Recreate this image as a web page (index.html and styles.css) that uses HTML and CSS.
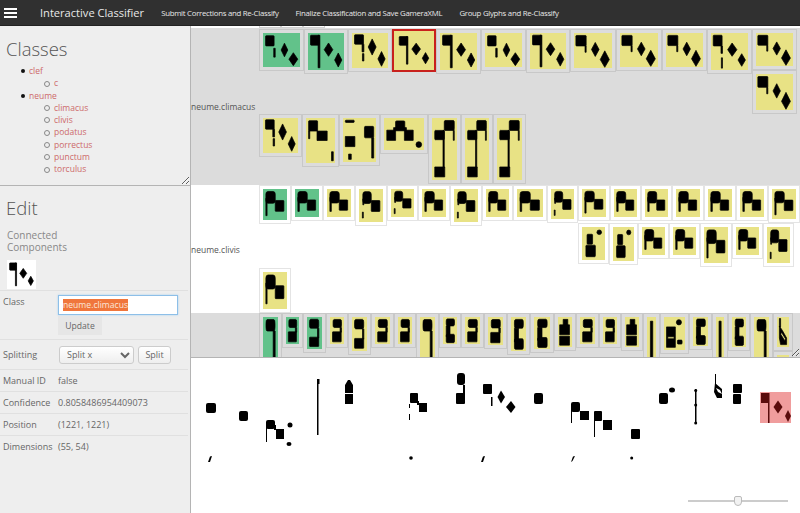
FILE: index.html
```html
<!DOCTYPE html>
<html lang="en">
<head>
    <meta charset="UTF-8">
    <meta name="viewport" content="width=device-width, initial-scale=1.0">
    <title>Interactive Classifier</title>
    <link rel="stylesheet" href="styles.css">
</head>
<body>
    <!-- Glyph shapes, stretched to each thumbnail's size -->
    <svg class="defs" width="0" height="0">
        <symbol id="c1" viewBox="0 0 100 100" preserveAspectRatio="none"><rect x="7" y="8" width="23" height="30" rx="2"/><rect x="29" y="45" width="4" height="26"/><polygon points="49,50 58,30 67,50 58,70"/><polygon points="70,77 82,58 94,77 82,96"/></symbol>
        <symbol id="c2" viewBox="0 0 100 100" preserveAspectRatio="none"><rect x="7" y="6" width="24" height="27" rx="2"/><rect x="28" y="6" width="5" height="88"/><polygon points="45,45 57,27 69,45 57,63"/><polygon points="74,73 84,54 94,73 84,92"/></symbol>
        <symbol id="c3" viewBox="0 0 100 100" preserveAspectRatio="none"><rect x="7" y="5" width="25" height="27" rx="2"/><rect x="28" y="32" width="5" height="22"/><rect x="29" y="59" width="4" height="21"/><polygon points="45,40 56,17 67,40 56,63"/><polygon points="72,74 82,53 92,74 82,95"/></symbol>
        <symbol id="c4" viewBox="0 0 100 100" preserveAspectRatio="none"><rect x="9" y="10" width="23" height="25" rx="2"/><rect x="29" y="10" width="4" height="79"/><polygon points="44,46 56,29 68,46 56,63"/><polygon points="73,72 82,56 91,72 82,88"/></symbol>
        <symbol id="c8" viewBox="0 0 100 100" preserveAspectRatio="none"><rect x="5" y="7" width="27" height="30" rx="2"/><rect x="29" y="37" width="3" height="18"/><polygon points="46,47 56,27 66,47 56,67"/><polygon points="69,76 81,51 93,76 81,98"/></symbol>
        <symbol id="c11" viewBox="0 0 100 100" preserveAspectRatio="none"><rect x="6" y="6" width="24" height="29" rx="2"/><rect x="27" y="35" width="4" height="20"/><rect x="28" y="67" width="3" height="28"/><polygon points="45,45 57,27 70,45 57,63"/><polygon points="73,73 83,56 93,73 83,90"/></symbol>
        <symbol id="t1" viewBox="0 0 100 100" preserveAspectRatio="none"><rect x="9" y="6" width="31" height="23" rx="2"/><rect x="9" y="29" width="4" height="17"/><rect x="38" y="29" width="35" height="21"/><rect x="88" y="75" width="6" height="20"/></symbol>
        <symbol id="t2" viewBox="0 0 100 100" preserveAspectRatio="none"><rect x="7" y="5" width="27" height="5" rx="2"/><rect x="7" y="42" width="29" height="23"/><rect x="17" y="82" width="8" height="12"/><rect x="65" y="19" width="28" height="26" rx="3"/><rect x="87" y="45" width="6" height="46"/></symbol>
        <symbol id="t3" viewBox="0 0 100 100" preserveAspectRatio="none"><rect x="29" y="9" width="23" height="28" rx="3"/><rect x="7" y="38" width="22" height="32"/><rect x="51" y="38" width="22" height="32"/><rect x="24" y="30" width="32" height="10"/><ellipse cx="87" cy="83" rx="7" ry="9"/></symbol>
        <symbol id="j" viewBox="0 0 100 100" preserveAspectRatio="none"><rect x="49" y="4" width="40" height="16" rx="3"/><rect x="85" y="20" width="4" height="16"/><rect x="11" y="20" width="38" height="15" rx="2"/><rect x="44" y="20" width="5" height="60"/><rect x="11" y="79" width="40" height="16"/></symbol>
        <symbol id="v1" viewBox="0 0 100 100" preserveAspectRatio="none"><rect x="12" y="8" width="39" height="38" rx="9"/><rect x="12" y="30" width="5" height="56"/><rect x="51" y="37" width="36" height="35" rx="2"/></symbol>
        <symbol id="v2" viewBox="0 0 100 100" preserveAspectRatio="none"><rect x="12" y="9" width="39" height="41" rx="9"/><rect x="12" y="30" width="6" height="50"/><rect x="51" y="39" width="35" height="37" rx="2"/></symbol>
        <symbol id="v3" viewBox="0 0 100 100" preserveAspectRatio="none"><rect x="16" y="8" width="35" height="36" rx="9"/><rect x="16" y="30" width="4" height="18"/><rect x="14" y="70" width="4" height="18"/><rect x="51" y="35" width="36" height="33" rx="2"/></symbol>
        <symbol id="p1" viewBox="0 0 100 100" preserveAspectRatio="none"><rect x="22" y="22" width="24" height="30" rx="3"/><rect x="17" y="55" width="41" height="35" rx="3"/><ellipse cx="75" cy="16" rx="10" ry="7"/></symbol>
        <symbol id="s1" viewBox="0 0 100 100" preserveAspectRatio="none"><rect x="22" y="9" width="60" height="30" rx="8"/><rect x="72" y="39" width="10" height="17"/><rect x="18" y="55" width="62" height="37" rx="2"/></symbol>
        <symbol id="s1b" viewBox="0 0 100 100" preserveAspectRatio="none"><rect x="17" y="7" width="61" height="28" rx="8"/><rect x="70" y="35" width="9" height="30"/><rect x="17" y="63" width="61" height="29" rx="2"/></symbol>
        <symbol id="s2" viewBox="0 0 100 100" preserveAspectRatio="none"><rect x="20" y="5" width="60" height="22" rx="8"/><rect x="68" y="27" width="13" height="73"/></symbol>
        <symbol id="s3" viewBox="0 0 100 100" preserveAspectRatio="none"><rect x="23" y="7" width="59" height="26" rx="8"/><rect x="23" y="33" width="27" height="40"/><rect x="23" y="64" width="59" height="31" rx="6"/></symbol>
        <symbol id="s4" viewBox="0 0 100 100" preserveAspectRatio="none"><rect x="37" y="8" width="33" height="20"/><rect x="12" y="26" width="70" height="33"/><rect x="12" y="64" width="70" height="30"/></symbol>
        <symbol id="s5" viewBox="0 0 100 100" preserveAspectRatio="none"><path fill-rule="evenodd" d="M12 30H54V92H12ZM18 60V66H48V60Z"/><ellipse cx="71" cy="16" rx="12" ry="8"/><rect x="64" y="70" width="22" height="12" rx="3"/></symbol>
        <symbol id="s6" viewBox="0 0 100 100" preserveAspectRatio="none"><rect x="38" y="8" width="26" height="92"/></symbol>
        <symbol id="s7" viewBox="0 0 100 100" preserveAspectRatio="none"><rect x="20" y="5" width="10" height="28"/><path fill-rule="evenodd" d="M20 30L45 45L80 70V92H30L20 70ZM36 50L32 58L66 80L70 72Z"/></symbol>
    </svg>

    <header class="navbar">
        <button class="menu-toggle" aria-label="Menu"><span></span><span></span><span></span></button>
        <span class="navbar-title">Interactive Classifier</span>
        <nav class="navbar-links">
            <a>Submit Corrections and Re-Classify</a>
            <a>Finalize Classification and Save GameraXML</a>
            <a>Group Glyphs and Re-Classify</a>
        </nav>
    </header>

    <div class="workspace">
        <aside class="sidebar">
            <section class="classes-panel">
                <h2 class="panel-title">Classes</h2>
                <ul class="class-tree">
                    <li><a>clef</a>
                        <ul>
                            <li><a>c</a></li>
                        </ul>
                    </li>
                    <li><a>neume</a>
                        <ul>
                            <li><a>climacus</a></li>
                            <li><a>clivis</a></li>
                            <li><a>podatus</a></li>
                            <li><a>porrectus</a></li>
                            <li><a>punctum</a></li>
                            <li><a>torculus</a></li>
                        </ul>
                    </li>
                </ul>
            </section>

            <section class="edit-panel">
                <h2 class="panel-title">Edit</h2>
                <h3 class="panel-subtitle">Connected Components</h3>
                <svg class="edit-preview" width="29" height="29"><use href="#c4"/></svg>
                <div class="field-row field-row-class">
                    <span class="field-label">Class</span>
                    <div class="field-value">
                        <div class="class-input"><span class="class-input-selected">neume.climacus</span></div>
                        <button class="btn-update">Update</button>
                    </div>
                </div>
                <div class="field-row field-row-split">
                    <span class="field-label">Splitting</span>
                    <div class="field-value split-controls">
                        <select class="split-select"><option>Split x</option></select>
                        <button class="btn-split">Split</button>
                    </div>
                </div>
                <div class="field-row"><span class="field-label">Manual ID</span><span class="field-value">false</span></div>
                <div class="field-row"><span class="field-label">Confidence</span><span class="field-value">0.8058486954409073</span></div>
                <div class="field-row"><span class="field-label">Position</span><span class="field-value">(1221, 1221)</span></div>
                <div class="field-row"><span class="field-label">Dimensions</span><span class="field-value">(55, 54)</span></div>
            </section>
        </aside>

        <main class="content">
            <section class="glyph-table">
                <div class="group group-sliver">
                    <div class="group-label"></div>
                    <div class="line">
                        <div class="thumb thumb-cut"></div>
                        <div class="thumb thumb-cut"></div>
                        <div class="thumb thumb-cut"></div>
                    </div>
                </div>

                <div class="group group-shaded group-climacus">
                    <div class="group-label">neume.climacus</div>
                    <div class="group-lines">
                        <div class="line">
                            <div class="thumb known"><svg width="37" height="34"><use href="#c1"/></svg></div>
                            <div class="thumb known"><svg width="36" height="37"><use href="#c2"/></svg></div>
                            <div class="thumb"><svg width="36" height="35"><use href="#c3"/></svg></div>
                            <div class="thumb selected"><svg width="36" height="35"><use href="#c4"/></svg></div>
                            <div class="thumb"><svg width="37" height="37"><use href="#c2"/></svg></div>
                            <div class="thumb"><svg width="37" height="34"><use href="#c1"/></svg></div>
                            <div class="thumb"><svg width="36" height="36"><use href="#c2"/></svg></div>
                            <div class="thumb"><svg width="38" height="35"><use href="#c8"/></svg></div>
                            <div class="thumb"><svg width="38" height="34"><use href="#c8"/></svg></div>
                            <div class="thumb"><svg width="37" height="34"><use href="#c8"/></svg></div>
                            <div class="thumb"><svg width="37" height="37"><use href="#c11"/></svg></div>
                            <div class="thumb-stack">
                                <div class="thumb"><svg width="37" height="33"><use href="#c8"/></svg></div>
                                <div class="thumb"><svg width="37" height="36"><use href="#c8"/></svg></div>
                            </div>
                        </div>
                        <div class="line line-tall">
                            <div class="thumb"><svg width="35" height="35"><use href="#c3"/></svg></div>
                            <div class="thumb"><svg width="29" height="45"><use href="#t1"/></svg></div>
                            <div class="thumb"><svg width="33" height="44"><use href="#t2"/></svg></div>
                            <div class="thumb"><svg width="40" height="32"><use href="#t3"/></svg></div>
                            <div class="thumb"><svg width="25" height="62"><use href="#j"/></svg></div>
                            <div class="thumb"><svg width="24" height="62"><use href="#j"/></svg></div>
                            <div class="thumb"><svg width="25" height="62"><use href="#j"/></svg></div>
                        </div>
                    </div>
                </div>

                <div class="group group-clivis">
                    <div class="group-label">neume.clivis</div>
                    <div class="group-lines">
                        <div class="line line-clivis-first">
                            <div class="thumb known"><svg width="24" height="31"><use href="#v1"/></svg></div>
                            <div class="thumb known"><svg width="24" height="28"><use href="#v2"/></svg></div>
                            <div class="thumb"><svg width="24" height="28"><use href="#v2"/></svg></div>
                            <div class="thumb"><svg width="24" height="33"><use href="#v3"/></svg></div>
                            <div class="thumb"><svg width="23" height="28"><use href="#v3"/></svg></div>
                            <div class="thumb"><svg width="24" height="28"><use href="#v2"/></svg></div>
                            <div class="thumb"><svg width="24" height="33"><use href="#v3"/></svg></div>
                            <div class="thumb"><svg width="23" height="28"><use href="#v2"/></svg></div>
                            <div class="thumb"><svg width="26" height="28"><use href="#v2"/></svg></div>
                            <div class="thumb"><svg width="23" height="30"><use href="#v3"/></svg></div>
                            <div class="thumb"><svg width="24" height="28"><use href="#v1"/></svg></div>
                            <div class="thumb"><svg width="23" height="28"><use href="#v2"/></svg></div>
                            <div class="thumb"><svg width="23" height="28"><use href="#v2"/></svg></div>
                            <div class="thumb"><svg width="24" height="28"><use href="#v2"/></svg></div>
                            <div class="thumb"><svg width="24" height="28"><use href="#v2"/></svg></div>
                            <div class="thumb"><svg width="24" height="28"><use href="#v2"/></svg></div>
                            <div class="thumb"><svg width="24" height="30"><use href="#v1"/></svg></div>
                        </div>
                        <div class="line line-clivis-second">
                            <div class="thumb"><svg width="23" height="33"><use href="#p1"/></svg></div>
                            <div class="thumb"><svg width="21" height="34"><use href="#p1"/></svg></div>
                            <div class="thumb"><svg width="23" height="28"><use href="#v2"/></svg></div>
                            <div class="thumb"><svg width="23" height="28"><use href="#v2"/></svg></div>
                            <div class="thumb"><svg width="24" height="36"><use href="#v1"/></svg></div>
                            <div class="thumb"><svg width="23" height="28"><use href="#v2"/></svg></div>
                            <div class="thumb"><svg width="23" height="36"><use href="#v3"/></svg></div>
                        </div>
                        <div class="line line-clivis-third">
                            <div class="thumb"><svg width="24" height="37"><use href="#v1"/></svg></div>
                        </div>
                    </div>
                </div>

                <div class="group group-shaded">
                    <div class="group-label"></div>
                    <div class="line">
                        <div class="thumb known"><svg width="15" height="52"><use href="#s2"/></svg></div>
                        <div class="thumb known"><svg width="13" height="27"><use href="#s1"/></svg></div>
                        <div class="thumb known"><svg width="15" height="32"><use href="#s1b"/></svg></div>
                        <div class="thumb"><svg width="14" height="27"><use href="#s1"/></svg></div>
                        <div class="thumb"><svg width="15" height="34"><use href="#s1b"/></svg></div>
                        <div class="thumb"><svg width="15" height="27"><use href="#s1"/></svg></div>
                        <div class="thumb"><svg width="14" height="27"><use href="#s1"/></svg></div>
                        <div class="thumb"><svg width="15" height="52"><use href="#s2"/></svg></div>
                        <div class="thumb"><svg width="14" height="27"><use href="#s3"/></svg></div>
                        <div class="thumb"><svg width="15" height="27"><use href="#s1"/></svg></div>
                        <div class="thumb"><svg width="15" height="28"><use href="#s1"/></svg></div>
                        <div class="thumb"><svg width="15" height="34"><use href="#s3"/></svg></div>
                        <div class="thumb"><svg width="16" height="32"><use href="#s3"/></svg></div>
                        <div class="thumb"><svg width="14" height="30"><use href="#s4"/></svg></div>
                        <div class="thumb"><svg width="15" height="27"><use href="#s1"/></svg></div>
                        <div class="thumb"><svg width="14" height="27"><use href="#s1"/></svg></div>
                        <div class="thumb"><svg width="14" height="30"><use href="#s4"/></svg></div>
                        <div class="thumb"><svg width="9" height="52"><use href="#s6"/></svg></div>
                        <div class="thumb"><svg width="21" height="33"><use href="#s5"/></svg></div>
                        <div class="thumb"><svg width="15" height="29"><use href="#s3"/></svg></div>
                        <div class="thumb"><svg width="8" height="52"><use href="#s6"/></svg></div>
                        <div class="thumb"><svg width="14" height="30"><use href="#s3"/></svg></div>
                        <div class="thumb"><svg width="15" height="52"><use href="#s2"/></svg></div>
                        <div class="thumb-stack">
                            <div class="thumb"><svg width="12" height="30"><use href="#s7"/></svg></div>
                            <div class="thumb"><svg width="12" height="30"></svg></div>
                        </div>
                    </div>
                </div>
            </section>

            <section class="page-view">
                <!-- Page image: the glyphs as they sit on the manuscript, in window coordinates -->
                <svg class="page-image" width="609" height="155" viewBox="191 358 609 155">
                    <rect x="206" y="403" width="10" height="10" rx="2"/>
                    <rect x="239" y="411" width="9" height="10" rx="2"/>
                    <rect x="266" y="420" width="9" height="9" rx="2"/><rect x="276" y="429" width="8" height="10"/><rect x="266" y="427" width="1" height="15"/><rect x="274" y="425" width="2" height="5"/>
                    <circle cx="290" cy="425" r="2.5"/><ellipse cx="289" cy="444" rx="2.5" ry="2"/>
                    <rect x="317" y="379" width="1.5" height="56"/><rect x="318" y="379" width="1.5" height="5"/>
                    <polygon points="345,385 348,380 350,380 353,385 353,393 345,393"/><rect x="345" y="394" width="8" height="10"/>
                    <rect x="410" y="393" width="8" height="10" rx="1"/><rect x="419" y="403" width="8" height="9"/><rect x="417" y="401" width="2" height="4"/><rect x="409" y="404" width="1" height="4"/><rect x="409" y="414" width="1" height="6"/>
                    <rect x="457" y="373" width="8" height="12" rx="3"/><rect x="463" y="385" width="2" height="9"/><rect x="456" y="393" width="9" height="11" rx="1"/>
                    <rect x="483" y="384" width="9" height="10" rx="1"/><rect x="491" y="397" width="1.5" height="9"/>
                    <polygon points="497.5,397 501,390.500 505,397 501,403.500"/><polygon points="506,407 511,401 515.500,407 511,413"/>
                    <rect x="534" y="393" width="9" height="11" rx="2"/>
                    <rect x="571" y="402" width="9" height="10" rx="2"/><rect x="571" y="408" width="1" height="15"/><rect x="580" y="411" width="9" height="9"/>
                    <rect x="594" y="411" width="8" height="10" rx="1"/><rect x="594" y="418" width="1" height="19"/><rect x="603" y="420" width="9" height="10"/>
                    <rect x="631" y="429" width="9" height="10" rx="1"/>
                    <rect x="659" y="393" width="9" height="11" rx="2"/><ellipse cx="672" cy="390" rx="3" ry="2.500"/>
                    <rect x="695" y="389" width="1.500" height="35"/><circle cx="695.700" cy="390.500" r="1.500"/><circle cx="695.700" cy="405" r="1.500"/><circle cx="695.700" cy="423" r="1.500"/>
                    <rect x="715" y="374" width="1" height="10"/>
                    <path fill-rule="evenodd" d="M715 383L722 389V398H717L714 392ZM716 388L718 392L722 394L720 390Z"/>
                    <rect x="733" y="384" width="9" height="9" rx="1"/><rect x="733" y="394" width="8" height="10" rx="1"/>
                    <polygon points="208,462 210,456.500 212,456 210,462"/>
                    <circle cx="411" cy="458" r="1.800"/>
                    <polygon points="481,462 483,456.500 485,456 483,462"/>
                    <polygon points="571,462 573,456.500 575,456 572.500,461"/>
                    <circle cx="631.700" cy="458" r="1.500"/>
                    <rect class="highlight" x="760" y="392" width="31" height="31"/>
                    <g class="highlight-glyph">
                        <rect x="761" y="393" width="8" height="10"/><rect x="768" y="393" width="1.500" height="30"/>
                        <polygon points="773.500,407 778,400.500 782.500,407 778,413.500"/><polygon points="785,416 788,410 791,416 788,422"/>
                    </g>
                </svg>
                <input class="zoom-slider" type="range" min="0" max="100" value="50">
            </section>
        </main>
    </div>
</body>
</html>
```

FILE: styles.css
```css
* {
    box-sizing: border-box;
    margin: 0;
    padding: 0;
}

html, body {
    height: 100%;
    overflow: hidden;
}

body {
    display: flex;
    flex-direction: column;
    font-family: 'Open Sans', sans-serif;
    color: #555;
    background: #fff;
}

.defs {
    position: absolute;
}

/* Soften the drawn glyphs a little, they are scans */
symbol > * {
    stroke: #000;
    stroke-width: 0.7px;
    stroke-linejoin: round;
    vector-effect: non-scaling-stroke;
}

/* Top bar */
.navbar {
    flex: none;
    display: flex;
    align-items: center;
    height: 26px;
    background: #303030;
    border-bottom: 1px solid #222;
    color: #e8e8e8;
}

.menu-toggle {
    display: flex;
    flex-direction: column;
    gap: 2px;
    width: 13px;
    margin-left: 4px;
    background: none;
    border: none;
}

.menu-toggle span {
    display: block;
    height: 2px;
    background: #fff;
}

.navbar-title {
    margin-left: 23px;
    font-size: 11.1px;
}

.navbar-links {
    display: flex;
    gap: 17px;
    margin-left: 17px;
    font-size: 7.8px;
    letter-spacing: -0.27px;
}

/* Layout */
.workspace {
    flex: 1;
    display: flex;
    min-height: 0;
}

.sidebar {
    flex: none;
    display: flex;
    flex-direction: column;
    width: 191px;
    background: #eee;
    border-right: 1px solid #b4b4b4;
}

.content {
    flex: 1;
    display: flex;
    flex-direction: column;
    min-width: 0;
}

/* Classes panel */
.classes-panel {
    flex: none;
    height: 160px;
    padding: 12px 6px 0;
    border-bottom: 1px solid #b4b4b4;
    overflow: hidden;
    resize: vertical;
}

.panel-title {
    font-size: 18.5px;
    font-weight: 300;
    line-height: 22px;
    color: #555;
}

.class-tree {
    margin-top: 5px;
    padding-left: 23px;
    list-style: none;
    font-size: 8.5px;
    line-height: 12.3px;
}

.class-tree ul {
    padding-left: 23px;
    list-style: none;
}

.class-tree li::before {
    content: "";
    display: inline-block;
    width: 4px;
    height: 4px;
    margin: 0 4px 1px -8px;
    border-radius: 50%;
    background: #111;
    vertical-align: middle;
}

.class-tree ul li::before {
    background: none;
    border: 1px solid #888;
}

.class-tree a {
    color: #cd6a6a;
}

/* Edit panel */
.edit-panel {
    flex: 1;
    padding-top: 11px;
}

.edit-panel .panel-title {
    padding-left: 6px;
}

.panel-subtitle {
    width: 90px;
    margin: 11px 0 0 7px;
    font-size: 10px;
    font-weight: 400;
    line-height: 11.5px;
    color: #888;
}

.edit-preview {
    display: block;
    margin: 7px 0 1px 7px;
    background: #fff;
}

.field-row {
    display: flex;
    width: 188px;
    height: 22px;
    align-items: center;
    padding-left: 3px;
    border-top: 1px solid #e0e0e0;
    font-size: 9px;
    color: #666;
}

.field-label {
    flex: none;
    width: 55px;
}

.field-row-class {
    height: 49px;
    align-items: flex-start;
    padding-top: 4px;
}

.field-row-split {
    height: 30px;
    align-items: center;
}

.class-input {
    width: 120px;
    height: 20px;
    padding: 3px 4px;
    background: #fff;
    border: 1px solid #8dbfe8;
    box-shadow: 0 0 2px #a9d2f2;
    font-size: 8.6px;
    line-height: 12px;
}

.class-input-selected {
    background: #f0763c;
    color: #fbe6da;
}

.btn-update {
    display: block;
    width: 44px;
    height: 19px;
    margin-top: 1px;
    background: #e6e6e6;
    border: none;
    font: 8.6px 'Open Sans', sans-serif;
    color: #666;
}

.split-controls {
    display: flex;
    gap: 4px;
    padding-left: 1px;
}

.split-select {
    width: 75px;
    height: 18px;
    padding-left: 3px;
    background: linear-gradient(#fff, #eee);
    border: 1px solid #ccc;
    border-radius: 3px;
    font: 9px 'Open Sans', sans-serif;
    color: #666;
}

.btn-split {
    width: 33px;
    height: 18px;
    background: linear-gradient(#fff, #eee);
    border: 1px solid #ccc;
    border-radius: 3px;
    font: 9px 'Open Sans', sans-serif;
    color: #666;
}

/* Glyph table */
.glyph-table {
    flex: none;
    height: 332px;
    border-bottom: 1px solid #b4b4b4;
    overflow: hidden;
    resize: vertical;
}

.group {
    display: flex;
    align-items: center;
}

.group-shaded {
    align-items: flex-start;
    background: #dcdcdc;
}

.group-sliver {
    height: 2px;
    align-items: flex-end;
    overflow: hidden;
}

.group-climacus {
    align-items: center;
    padding: 1px 0;
}

.group-label {
    flex: none;
    width: 68px;
    font-size: 8.5px;
    white-space: nowrap;
}

.line {
    display: flex;
    align-items: flex-start;
}

.line-tall {
    height: 70px;
}

.line-clivis-first {
    height: 38px;
}

.line-clivis-second {
    height: 45px;
    margin-left: 319px;
}

.line-clivis-third {
    height: 45px;
}

.thumb {
    flex: none;
    padding: 3px;
    border: 1px solid #c8c8c8;
}

.thumb svg {
    display: block;
    background: #e8e285;
}

.group-clivis .thumb {
    border-color: #e4e4e4;
}

.thumb.known svg {
    background: #62c28a;
}

.thumb.selected {
    padding: 2px;
    background: #e8e285;
    border: 2px solid #c8211d;
}

.thumb-cut {
    width: 22px;
    height: 10px;
    border-color: #d0d0d0;
}

.thumb-stack {
    flex: none;
}

/* Page view */
.page-view {
    flex: 1;
    position: relative;
    overflow: hidden;
}

.page-image {
    display: block;
}

.highlight {
    fill: #f09d9d;
}

.highlight-glyph {
    fill: #5a0c0c;
}

.zoom-slider {
    position: absolute;
    right: 12px;
    bottom: 7px;
    width: 100px;
    height: 10px;
    appearance: none;
    background: none;
}

.zoom-slider::-webkit-slider-runnable-track {
    height: 2px;
    background: #ccc;
}

.zoom-slider::-webkit-slider-thumb {
    appearance: none;
    width: 8px;
    height: 10px;
    margin-top: -4px;
    background: #f2f2f2;
    border: 1px solid #bbb;
    border-radius: 2px 2px 4px 4px;
}
```
